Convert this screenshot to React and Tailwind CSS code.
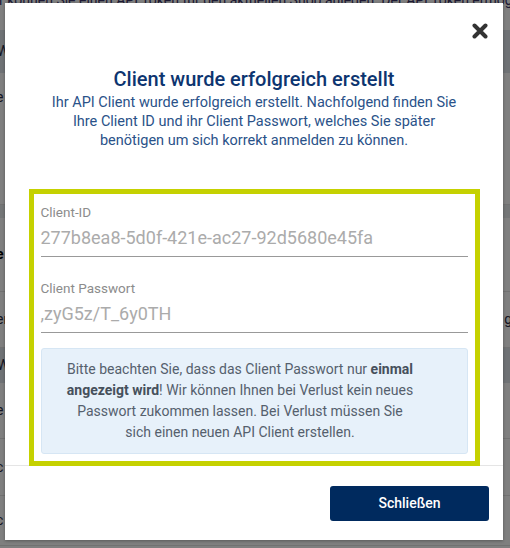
import React from "react";

function BgRow({ h, className = "", children }) {
  return (
    <div className={`flex items-center justify-between border-b border-[#e2e2e2] px-0 ${className}`} style={{ height: h }}>
      {children}
    </div>
  );
}

export default function App() {
  return (
    <div className="relative h-[548px] w-[510px] overflow-hidden bg-white font-['Roboto',sans-serif]">
      {/* background page */}
      <div className="flex flex-col text-[14px] text-[#2b2b44]">
        <div className="h-[30px] -ml-[1px]">
          <p className="-mt-[9px] whitespace-nowrap text-[14px] leading-[18px] text-[#3a3468]">
            r können Sie einen API Token für den aktuellen Shop anlegen. Der API Token ermöglicht
          </p>
        </div>
        <div className="flex h-[43px] items-center justify-between bg-[#dfe5ea] -ml-[3px]">
          <span>W</span>
          <span />
        </div>
        <BgRow h={132} className="items-start pt-[14px] -ml-[4px]">
          <span>e</span>
        </BgRow>
        <div className="h-[13px] bg-[#e8ecef]" />
        <BgRow h={74} className="-ml-[4px]">
          <span className="font-bold text-black">e</span>
        </BgRow>
        <BgRow h={56} className="-ml-[4px]">
          <span>en</span>
          <span className="-mr-[2px]">g</span>
        </BgRow>
        <div className="flex h-[35px] items-center bg-[#dfe5ea] -ml-[3px]">
          <span>W</span>
        </div>
        <BgRow h={56} className="-ml-[4px]">
          <span>e</span>
        </BgRow>
        <BgRow h={57} className="-ml-[4px]">
          <span>c</span>
        </BgRow>
        <BgRow h={50} className="-ml-[4px]">
          <span>c</span>
        </BgRow>
      </div>

      {/* overlay */}
      <div className="absolute inset-0 bg-black/50" />

      {/* modal */}
      <div className="absolute left-[5px] top-[3px] flex h-[537px] w-[498px] flex-col bg-white shadow-[0_1px_3px_rgba(0,0,0,0.3)]">
        <button className="absolute right-[14px] top-[19px] flex h-[18px] w-[18px] items-center justify-center">
          <svg width="16" height="16" viewBox="0 0 16 16">
            <path d="M2.5 2.5 L13.5 13.5 M13.5 2.5 L2.5 13.5" stroke="#333" strokeWidth="4" strokeLinecap="round" fill="none" />
          </svg>
        </button>

        <div className="flex flex-1 flex-col items-center pt-[64px]">
          <h2 className="text-[20px] font-medium leading-[24px] text-[#0d3570]">Client wurde erfolgreich erstellt</h2>
          <p className="mt-[2px] whitespace-nowrap text-center text-[14.5px] leading-[19px] text-[#2a5289]">
            Ihr API Client wurde erfolgreich erstellt. Nachfolgend finden Sie
            <br />
            Ihre Client ID und ihr Client Passwort, welches Sie später
            <br />
            benötigen um sich korrekt anmelden zu können.
          </p>

          <div className="relative z-10 mt-[39px] -mb-[2px] w-[451px] border-[5px] border-[#c5d100] bg-white px-[7px] pt-[10px] pb-[7px]">
            <div className="flex flex-col">
              <label className="text-[13.5px] leading-[16px] text-[#8c8c8c]">Client-ID</label>
              <div className="border-b border-[#999] pt-[5px] pb-[5px] text-[18px] leading-[26px] text-[#ababab]">
                277b8ea8-5d0f-421e-ac27-92d5680e45fa
              </div>
            </div>
            <div className="mt-[23px] flex flex-col">
              <label className="text-[13.5px] leading-[16px] text-[#8c8c8c]">Client Passwort</label>
              <div className="border-b border-[#999] pt-[5px] pb-[5px] text-[18px] leading-[26px] text-[#ababab]">
                ,zyG5z/T_6y0TH
              </div>
            </div>
            <div className="mt-[15px] whitespace-nowrap rounded-[3px] border border-[#d6e6f4] bg-[#e7f1fa] pl-[4px] pr-[32px] py-[10px] text-center text-[14px] leading-[21px] text-[#55606d]">
              Bitte beachten Sie, dass das Client Passwort nur <b className="font-bold text-[#46505c]">einmal</b>
              <br />
              <b className="font-bold text-[#46505c]">angezeigt wird</b>! Wir können Ihnen bei Verlust kein neues
              <br />
              Passwort zukommen lassen. Bei Verlust müssen Sie
              <br />
              sich einen neuen API Client erstellen.
            </div>
          </div>
        </div>

        <div className="flex justify-end border-t border-[#e5e5e5] pt-[20px] pr-[14px] pb-[19px]">
          <button className="h-[35px] w-[159px] rounded-[3px] bg-[#002a5e] text-[14px] font-medium text-white">
            Schließen
          </button>
        </div>
      </div>
    </div>
  );
}
